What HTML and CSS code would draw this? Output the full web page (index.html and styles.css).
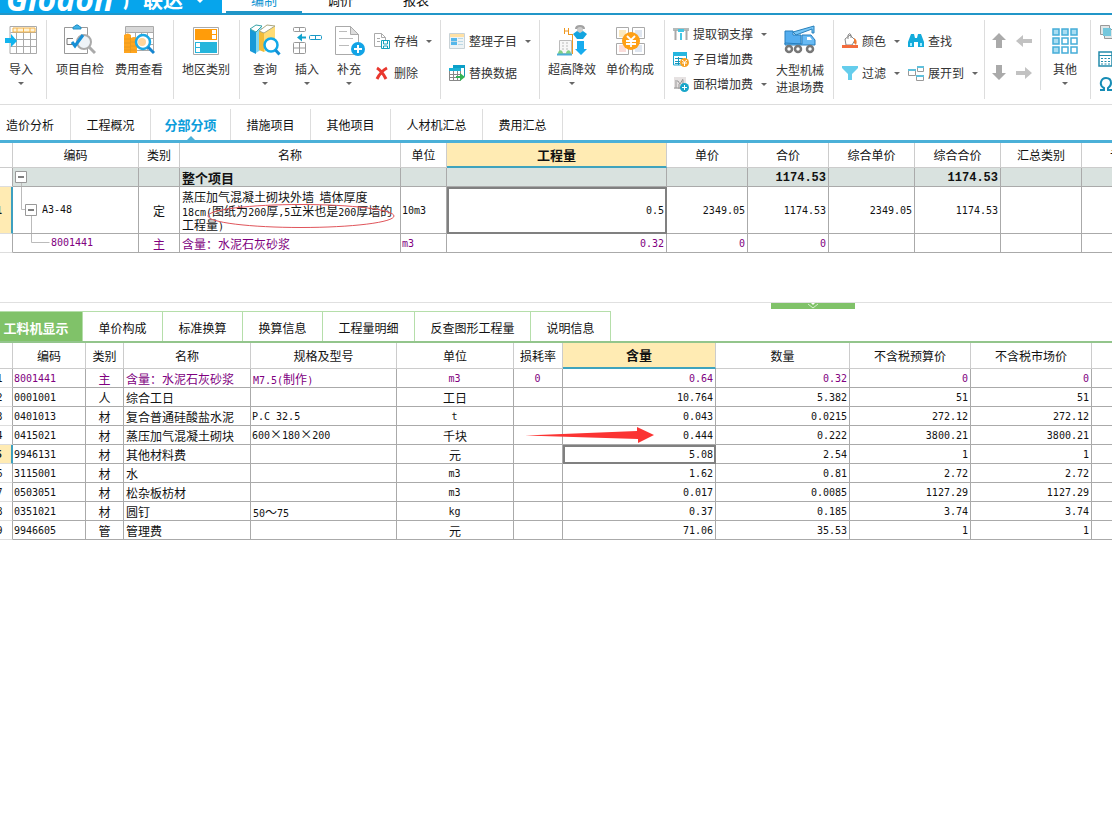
FILE: index.html
```html
<!DOCTYPE html>
<html lang="zh-CN">
<head>
<meta charset="utf-8">
<title>分部分项</title>
<link rel="stylesheet" href="styles.css">
</head>
<body>
<header class="titlebar">
  <button class="brand"><span class="brand-en">Glodon</span><span class="brand-cn">广联达</span><svg class="brand-caret" width="10" height="6" viewBox="0 0 10 6"><path d="M0 0h10L5 5z" fill="#fff"/></svg></button>
  <nav class="menu">
    <button class="menu-item active">编制</button>
    <button class="menu-item">调价</button>
    <button class="menu-item">报表</button>
  </nav>
</header>

<section class="ribbon">
  <div class="group g-import">
    <button class="big"><svg class="i32" viewBox="0 0 32 32"><path d="M5 2.500h26.500v27H5z" fill="#fff" stroke="#aaa"/><path d="M5.500 8.500h26M5.500 15.500h26M5.500 22.500h26M11.500 8v21M18.500 8v21M25.500 8v21" stroke="#aaa" fill="none"/><path d="M8 4h22v4H8zM12 4v4M18.500 4v4M25 4v4" fill="#fff3d8" stroke="#f3b44a"/><path d="M0 14h6v-4l6 7-6 6v-4H0z" fill="#12b4ee"/></svg><span>导入</span><i class="caret"></i></button>
  </div>
  <div class="group g-check">
    <button class="big"><svg class="i32" viewBox="0 0 32 32"><path d="M.5 3.500h23v26H.5z" fill="#fff" stroke="#999"/><path d="M9 4c0-2 2-1 3-3h2c1 2 3 1 3 3v1H9z" fill="#3fb3e8" stroke="#258fc4"/><path d="M9 14.500H3v6h7" fill="none" stroke="#777"/><circle cx="20" cy="18" r="7" fill="#eef3f7" stroke="#aaa" stroke-width="2"/><path d="M25 23l6 6" stroke="#aaa" stroke-width="3"/><path d="M8 18l3 4L19 11" fill="none" stroke="#168fd6" stroke-width="3"/></svg><span>项目自检</span></button>
    <button class="big"><svg class="i32" viewBox="0 0 32 32"><path d="M2.500 2.500h28v24h-28z" fill="#fff" stroke="#aaa"/><path d="M3 3h27v5H3z" fill="#d8d8d8"/><path d="M3 8.500h27M12.500 8v18M18.500 8v18M24.500 8v18M12 14.500h18M12 20.500h18" stroke="#aaa"/><path d="M1 11q4-3 7 0v3q3-2 6 0v15H1z" fill="#ffa51e"/><path d="M1 15h6M1 19h6M1 23h6M1 26h6M8 18h5M8 22h5M8 26h5M7.500 13v16" stroke="#e89a20"/><circle cx="20" cy="18" r="7" fill="#fff" stroke="#1ba8e5" stroke-width="2.500"/><circle cx="19" cy="18" r="4" fill="#ffd59b"/><path d="M25 23l6 6" stroke="#1685d0" stroke-width="3"/></svg><span>费用查看</span></button>
  </div>
  <div class="group g-region">
    <button class="big"><svg class="i32" viewBox="0 0 32 32"><path d="M3.500 3.500h25v27h-25z" fill="#fff" stroke="#aaa"/><path d="M5 5h22v11H5z" fill="#ff9c0a"/><path d="M22 6h4v4h-4zM22 11h4v4h-4z" fill="#fff"/><path d="M5 18h22v11H5z" fill="#25b5dc"/><path d="M6 19h4v4H6zM6 24h4v4H6z" fill="#fff"/></svg><span>地区类别</span></button>
  </div>
  <div class="group g-edit">
    <button class="big"><svg class="i32" viewBox="0 0 32 32"><path d="M1 5l6 3v22l-6-3z" fill="#1799d8"/><path d="M7 8l6-5v22l-6 4z" fill="#7fd6f2"/><path d="M1 5l6-4 6 1-6 6z" fill="#fff" stroke="#36a3a8"/><path d="M10 7l5 2v19l-5-2z" fill="#f1bb38"/><path d="M15 9l11-7v20l-11 6z" fill="#ffdc75"/><path d="M10 7l8-6 8 1-11 7z" fill="#fff" stroke="#aaa67d"/><circle cx="22" cy="21" r="6.500" fill="#fff" stroke="#12a9e8" stroke-width="2.500"/><path d="M26.500 26l4 4.500" stroke="#1390d5" stroke-width="3"/></svg><span>查询</span><i class="caret"></i></button>
    <button class="big"><svg class="i32" viewBox="0 0 32 32"><g fill="#fff" stroke="#999"><rect x="2.500" y="3.500" width="12" height="4" rx="1"/><rect x="2.500" y="18.500" width="12" height="11" rx="1"/><path d="M2.500 24h12M8.500 3.500v4M8.500 18.500v11"/></g><rect x="18.500" y="11.500" width="12" height="4" rx="1" fill="#fff" stroke="#1999c7"/><path d="M24.500 11v5" stroke="#1999c7"/><path d="M6 13.500l5-4v3h4v2h-4v3z" fill="#10a2cd"/></svg><span>插入</span><i class="caret"></i></button>
    <button class="big"><svg class="i32" viewBox="0 0 32 32"><path d="M2.500 2.500h15l8 8v20h-23z" fill="#fff" stroke="#aaa"/><path d="M17.500 2.500v8h8z" fill="#ddd" stroke="#aaa"/><path d="M6 7.500h8M6 14.500h14M6 21.500h10" stroke="#bbb"/><circle cx="25" cy="25" r="7" fill="#12a4e6"/><path d="M21 25h8M25 21v8" stroke="#fff" stroke-width="2"/></svg><span>补充</span><i class="caret"></i></button>
    <div class="stack two">
      <button class="small"><svg class="i16" viewBox="0 0 16 16"><path d="M.5 .5h7l4 4v9H.5z" fill="#fff" stroke="#aaa"/><path d="M7.500 .5v4h4M3 5.500h3M3 8.500h3" stroke="#aaa" fill="none"/><path d="M7.500 7.500h8v8h-8z" fill="#fff" stroke="#15a3bd"/><path d="M9.500 8v3h4V8M9.500 15v-2h4v2" fill="none" stroke="#15a3bd"/></svg><span>存档</span><i class="caret"></i></button>
      <button class="small"><svg class="i16" viewBox="0 0 16 16"><path d="M3 3q5 3 9 11M13 3Q7 6 3 14" stroke="#e9372e" stroke-width="3" fill="none"/></svg><span>删除</span></button>
    </div>
  </div>
  <div class="group g-tidy">
    <div class="stack two">
      <button class="small"><svg class="i16" viewBox="0 0 16 16"><path d="M.5 .5h15v15H.5z" fill="#eef3f5" stroke="#c9d2d6"/><path d="M1 1h14v3H1z" fill="#ffe1a5"/><path d="M2 5h6v7H2z" fill="#55b7ea"/><path d="M2 8.500h6M9 5.500h5M9 8.500h5M9 11.500h5" stroke="#bad8e5"/></svg><span>整理子目</span><i class="caret"></i></button>
      <button class="small"><svg class="i16" viewBox="0 0 16 16"><path d="M4.500 .5h11v11h-11z" fill="#fff" stroke="#1695b4"/><path d="M4 0h12v3H4z" fill="#0c9fc8"/><path d="M.5 3.500h11v12H.5z" fill="#fff" stroke="#888"/><path d="M0 3h12v3H0z" fill="#18b2d6"/><path d="M1 9.500h10M1 12.500h10M4.500 6v9M8.500 6v9" stroke="#888"/><path d="M7 11h4V8l5 4-5 4v-3H7z" fill="#34b454"/></svg><span>替换数据</span></button>
    </div>
  </div>
  <div class="group g-price">
    <button class="big"><svg class="i32" viewBox="0 0 32 32"><path d="M3.500 16.500h12v13h-12z" fill="#f7f7f7" stroke="#bbb"/><path d="M6 19h2M10 19h2M6 22h2M10 22h2M6 25h2M10 25h2" stroke="#bbb"/><path d="M2 30c0-5 5-5 5 0M10 30c0-5 5-5 5 0" fill="#83d083"/><path d="M1 30.500h15" stroke="#4bafd7" stroke-width="2"/><path d="M8.500 4v6M12.500 4v6M8.500 7h4M12 10.500h5M16.500 10v20" fill="none" stroke="#ef9820"/><path d="M19 5q0-4 5-4t5 4z" fill="#a2a2a2"/><circle cx="24" cy="6" r="3" fill="#ccc"/><path d="M17 10l4-3 3 2 3-2 4 3-4 5h-6z" fill="#12a4df"/><path d="M21 17h7v8h3l-6 6-6-6h2z" fill="#17acee"/></svg><span>超高降效</span><i class="caret"></i></button>
    <button class="big"><svg class="i32" viewBox="0 0 32 32"><g fill="#fff" stroke="#aaa"><path d="M2.500 3.500h12v11h-12zM18.500 3.500h12v11h-12zM2.500 19.500h12v11h-12zM18.500 19.500h12v11h-12z"/></g><path d="M5 6h7v7H5z" fill="#fbe9bf"/><path d="M21 6h7v7h-7zM21 21h7v7h-7z" fill="#dfe6f0"/><path d="M5 21h7v7H5z" fill="#fbdcd9"/><circle cx="17" cy="17" r="9" fill="#ffa016"/><path d="M13 12l4 4 4-4M12 17h10M12 20h10M17 16v7" fill="none" stroke="#fff" stroke-width="1.800"/></svg><span>单价构成</span></button>
  </div>
  <div class="group g-fee">
    <div class="stack three">
      <button class="small"><svg class="i16" viewBox="0 0 16 16"><path d="M0 2h16v3H0z" fill="#b5bbbb"/><path d="M2.500 4v10M13.500 4v10" stroke="#aaa" stroke-width="2"/><path d="M5 3h6v3H5zM7 7h2v7H7z" fill="#44c6e3"/></svg><span>提取钢支撑</span><i class="caret"></i></button>
      <button class="small"><svg class="i16" viewBox="0 0 16 16"><path d="M.5 2h13v12H.5z" fill="#fff" stroke="#16a7d1"/><path d="M0 1h14v4H0z" fill="#25b6df"/><path d="M2 7.500h8M2 10.500h5M2 12.500h5M5.500 6v8" stroke="#1798bf"/><circle cx="11.500" cy="11.500" r="4.500" fill="#f7a122"/><path d="M9 9l2.500 2L14 9M9 12h5M11.500 11v4" stroke="#fff" fill="none"/></svg><span>子目增加费</span></button>
      <button class="small"><svg class="i16" viewBox="0 0 16 16"><path d="M1 1h12v12H1z" fill="#e6e2e2"/><path d="M2 5h3l2 3 3-5M3 6v6M6 8v5M10 4v8M1 12h9" stroke="#999" fill="none"/><circle cx="11.500" cy="11.500" r="4.500" fill="#19a6c9"/><path d="M9 11.500h5M11.500 9v5" stroke="#fff"/></svg><span>面积增加费</span><i class="caret"></i></button>
    </div>
    <button class="big tall"><svg class="i32" viewBox="0 0 32 32"><path d="M1 7h8v4h8v9H1z" fill="#54adef" stroke="#277ebd"/><path d="M9 8l21-6v7h-2V5L12 11z" fill="#77c6f7" stroke="#2980bb"/><path d="M18 20V11h9l4 5v5H1v-2z" fill="#68baf4" stroke="#277ebd"/><path d="M23 13h3l2 3h-5z" fill="#fff"/><g fill="#fff" stroke="#777" stroke-width="2.500"><circle cx="5" cy="25" r="3"/><circle cx="14" cy="25" r="3"/><circle cx="26" cy="25" r="3"/></g></svg><span>大型机械<br>进退场费</span></button>
  </div>
  <div class="group g-find">
    <div class="stack two">
      <button class="small"><svg class="i16" viewBox="0 0 16 16"><path d="M3 6l5-4 5 5-3 5H4z" fill="#fff" stroke="#888"/><path d="M6 6V2q2-3 3 0v3" fill="none" stroke="#888"/><path d="M12 5q4 2 2 7l-2-2z" fill="#ef7b32"/><path d="M0 12h16v3H0z" fill="#f36c3d"/></svg><span>颜色</span><i class="caret"></i></button>
      <button class="small"><svg class="i16" viewBox="0 0 16 16"><path d="M0 1h16v2l-6 6v6H6V9L0 3z" fill="#65cdec"/></svg><span>过滤</span><i class="caret"></i></button>
    </div>
    <div class="stack two">
      <button class="small"><svg class="i16" viewBox="0 0 16 16"><path d="M3 1h3l1 4h2l1-4h3l3 8v5h-6V9H6v5H0V9z" fill="#13abdb"/><path d="M2 10h2v3H2zM12 10h2v3h-2z" fill="#a4ecff"/></svg><span>查找</span></button>
      <button class="small"><svg class="i16" viewBox="0 0 16 16"><path d="M.5 4.500h7v6h-7zM9.500 1.500h6v5h-6zM8.500 10.500h7v5h-7z" fill="#fff" stroke="#999"/><path d="M0 4h8v2H0zM9 1h7v2H9zM8 10h8v2H8z" fill="#5fc0dc"/></svg><span>展开到</span><i class="caret"></i></button>
    </div>
  </div>
  <div class="group g-move short">
    <button class="arrow" aria-label="上移"><svg class="i16" viewBox="0 0 16 16"><path d="M8 0l7 7h-4v8H5V7H1z" fill="#aaa"/></svg></button>
    <button class="arrow" aria-label="左移"><svg class="i16" viewBox="0 0 16 16"><path d="M0 8l7-6v4h9v4H7v4z" fill="#c2c2c2"/></svg></button>
    <button class="arrow" aria-label="下移"><svg class="i16" viewBox="0 0 16 16"><path d="M8 15L1 8h4V0h6v8h4z" fill="#aaa"/></svg></button>
    <button class="arrow" aria-label="右移"><svg class="i16" viewBox="0 0 16 16"><path d="M16 8L9 2v4H0v4h9v4z" fill="#c2c2c2"/></svg></button>
  </div>
  <div class="group g-other">
    <button class="big"><svg class="i32" viewBox="0 0 32 32"><g fill="#fff" stroke="#45add8" stroke-width="1.500"><rect x="4" y="5" width="6" height="6" fill="#a9ddf2"/><rect x="13" y="5" width="6" height="6" fill="#a9ddf2"/><rect x="22" y="5" width="6" height="6" fill="#a9ddf2"/><rect x="4" y="14" width="6" height="6" fill="#a9ddf2"/><rect x="13" y="14" width="6" height="6"/><rect x="22" y="14" width="6" height="6"/><rect x="4" y="23" width="6" height="6" fill="#a9ddf2"/><rect x="13" y="23" width="6" height="6"/><rect x="22" y="23" width="6" height="6"/></g></svg><span>其他</span><i class="caret"></i></button>
  </div>
  <div class="group g-tools">
    <button class="arrow" aria-label="图元"><svg class="i16" viewBox="0 0 16 16"><path d="M2.500 .5h9v9h-9zM6.500 4.500h9v9h-9z" fill="#e1e6e7" stroke="#999"/><path d="M5 3h8v8H5z" fill="#74c7dc"/></svg></button>
    <button class="arrow" aria-label="计算器"><svg class="i16" viewBox="0 0 16 16"><path d="M1 1h13v14H1z" fill="#fff" stroke="#248cac" stroke-width="1.500"/><path d="M1 4.500h13" stroke="#248cac"/><path d="M3 7.500h10M3 10.500h10M3 13h10" stroke="#248cac" stroke-dasharray="2 1.500"/></svg></button>
    <button class="arrow" aria-label="特殊符号"><svg class="i16" viewBox="0 0 16 16"><path d="M2 13h4v-2Q2 9 3 5t5-4q5 0 5 5 0 3-3 5v2h5" fill="none" stroke="#168cb5" stroke-width="2"/></svg></button>
  </div>
</section>

<nav class="tabs">
  <button class="tab first">造价分析</button><button class="tab">工程概况</button><button class="tab active">分部分项</button><button class="tab">措施项目</button><button class="tab">其他项目</button><button class="tab wide">人材机汇总</button><button class="tab">费用汇总</button>
</nav>

<main>
<section class="pane upper">
  <table class="grid bill">
    <colgroup><col class="w25"><col class="w126"><col class="w41"><col class="w221"><col class="w46"><col class="w220"><col class="w81"><col class="w81"><col class="w86"><col class="w86"><col class="w81"><col class="w81"></colgroup>
    <thead><tr><th></th><th>编码</th><th>类别</th><th>名称</th><th>单位</th><th class="hot">工程量</th><th>单价</th><th>合价</th><th>综合单价</th><th>综合合价</th><th>汇总类别</th><th>专业</th></tr></thead>
    <tbody>
      <tr class="total"><td class="no"></td><td class="tree"><svg width="20" height="18" viewBox="0 0 20 18"><path d="M2.500 3.500h11v11h-11z" fill="#fff" stroke="#999"/><path d="M5 9h6" stroke="#000"/><path d="M8.500 15v3" stroke="#bbb"/></svg></td><td></td><td>整个项目</td><td></td><td></td><td></td><td class="r n">1174.53</td><td></td><td class="r n">1174.53</td><td></td><td></td></tr>
      <tr class="item"><td class="no cur n">1</td><td class="tree"><div class="node"><svg width="26" height="46" viewBox="0 0 26 46"><path d="M8.500 0v22.500h4M18.500 28v18" fill="none" stroke="#bbb"/><path d="M12.500 17.500h11v11h-11z" fill="#fff" stroke="#999"/><path d="M15 23h6" stroke="#000"/></svg><span class="n">A3-48</span></div></td><td class="c">定</td><td class="desc">蒸压加气混凝土砌块外墙&nbsp; 墙体厚度<br><span class="n">18cm(</span>图纸为<span class="n">200</span>厚<span class="n">,5</span>立米也是<span class="n">200</span>厚墙的<br>工程量<span class="n">)</span></td><td class="n">10m3</td><td class="r n sel">0.5</td><td class="r n">2349.05</td><td class="r n">1174.53</td><td class="r n">2349.05</td><td class="r n">1174.53</td><td></td><td></td></tr>
      <tr class="main"><td class="no"></td><td class="tree"><div class="node"><svg width="38" height="18" viewBox="0 0 38 18"><path d="M18.500 0v8.500h18" fill="none" stroke="#bbb"/></svg><span class="n">8001441</span></div></td><td class="c">主</td><td>含量：水泥石灰砂浆</td><td class="n">m3</td><td class="r n">0.32</td><td class="r n">0</td><td class="r n">0</td><td></td><td></td><td></td><td></td></tr>
    </tbody>
  </table>
  <svg class="circle-mark" width="188" height="26" viewBox="0 0 188 26"><ellipse cx="94" cy="13" rx="93" ry="11.500" fill="none" stroke="#e0555b"/></svg>
</section>

<div class="splitter"><button class="handle" aria-label="收起"><svg width="10" height="6" viewBox="0 0 10 6"><path d="M3 0h4L5 2z" fill="#fff"/><path d="M0 1l5 4 5-4" fill="none" stroke="#d8f0cf"/></svg></button></div>

<nav class="subtabs">
  <button class="subtab active">工料机显示</button><button class="subtab">单价构成</button><button class="subtab">标准换算</button><button class="subtab">换算信息</button><button class="subtab wide">工程量明细</button><button class="subtab wider">反查图形工程量</button><button class="subtab">说明信息</button>
</nav>

<section class="pane">
  <table class="grid res">
    <colgroup><col class="w25"><col class="w73"><col class="w38"><col class="w127"><col class="w146"><col class="w117"><col class="w49"><col class="w153"><col class="w134"><col class="w121"><col class="w121"><col class="w81"></colgroup>
    <thead><tr><th></th><th>编码</th><th>类别</th><th>名称</th><th>规格及型号</th><th>单位</th><th>损耗率</th><th class="hot">含量</th><th>数量</th><th>不含税预算价</th><th>不含税市场价</th><th></th></tr></thead>
    <tbody>
      <tr class="main"><td class="no n">1</td><td class="n">8001441</td><td class="c">主</td><td>含量：水泥石灰砂浆</td><td><span class="n">M7.5(</span>制作<span class="n">)</span></td><td class="c n">m3</td><td class="c n">0</td><td class="r n">0.64</td><td class="r n">0.32</td><td class="r n">0</td><td class="r n">0</td><td></td></tr>
      <tr><td class="no n">2</td><td class="n">0001001</td><td class="c">人</td><td>综合工日</td><td></td><td class="c">工日</td><td></td><td class="r n">10.764</td><td class="r n">5.382</td><td class="r n">51</td><td class="r n">51</td><td></td></tr>
      <tr><td class="no n">3</td><td class="n">0401013</td><td class="c">材</td><td>复合普通硅酸盐水泥</td><td class="n">P.C 32.5</td><td class="c n">t</td><td></td><td class="r n">0.043</td><td class="r n">0.0215</td><td class="r n">272.12</td><td class="r n">272.12</td><td></td></tr>
      <tr><td class="no n">4</td><td class="n">0415021</td><td class="c">材</td><td>蒸压加气混凝土砌块</td><td class="n">600<span class="times">×</span>180<span class="times">×</span>200</td><td class="c">千块</td><td></td><td class="r n">0.444</td><td class="r n">0.222</td><td class="r n">3800.21</td><td class="r n">3800.21</td><td></td></tr>
      <tr><td class="no cur n">5</td><td class="n">9946131</td><td class="c">材</td><td>其他材料费</td><td></td><td class="c">元</td><td></td><td class="r n sel">5.08</td><td class="r n">2.54</td><td class="r n">1</td><td class="r n">1</td><td></td></tr>
      <tr><td class="no n">6</td><td class="n">3115001</td><td class="c">材</td><td>水</td><td></td><td class="c n">m3</td><td></td><td class="r n">1.62</td><td class="r n">0.81</td><td class="r n">2.72</td><td class="r n">2.72</td><td></td></tr>
      <tr><td class="no n">7</td><td class="n">0503051</td><td class="c">材</td><td>松杂板枋材</td><td></td><td class="c n">m3</td><td></td><td class="r n">0.017</td><td class="r n">0.0085</td><td class="r n">1127.29</td><td class="r n">1127.29</td><td></td></tr>
      <tr><td class="no n">8</td><td class="n">0351021</td><td class="c">材</td><td>圆钉</td><td><span class="n">50</span>～<span class="n">75</span></td><td class="c n">kg</td><td></td><td class="r n">0.37</td><td class="r n">0.185</td><td class="r n">3.74</td><td class="r n">3.74</td><td></td></tr>
      <tr><td class="no n">9</td><td class="n">9946605</td><td class="c">管</td><td>管理费</td><td></td><td class="c">元</td><td></td><td class="r n">71.06</td><td class="r n">35.53</td><td class="r n">1</td><td class="r n">1</td><td></td></tr>
    </tbody>
  </table>
  <svg class="arrow-mark" width="130" height="16" viewBox="0 0 130 16"><path d="M0 8.500L112 4V0l17 8-16 8v-4z" fill="#fb3433"/></svg>
</section>
</main>
</body>
</html>
```
FILE: styles.css
```css
* { box-sizing: border-box; }
body {
  margin: 0;
  background: #fff;
  color: #111;
  font: 12px/16px "Noto Sans CJK SC", sans-serif;
  overflow-x: hidden;
}
button {
  margin: 0;
  padding: 0;
  border: 0;
  background: none;
  color: inherit;
  font: inherit;
  white-space: nowrap;
}
svg { display: block; flex: none; }

/* title bar */
.titlebar {
  display: flex;
  align-items: flex-end;
  height: 15px;
  overflow: hidden;
  border-bottom: 2px solid #2196c8;
}
.brand {
  display: flex;
  align-items: flex-end;
  justify-content: flex-start;
  flex: none;
  width: 222px;
  height: 32px;
  padding: 0 0 4px 6px;
  background: #06a5ec;
  color: #fff;
  font-weight: 700;
}
.brand-en {
  flex: none;
  width: 117px;
  font: italic 700 32px/20px "Open Sans", sans-serif;
  text-align: left;
}
.brand-cn { flex: none; width: 72px; font-size: 20px; line-height: 18px; text-align: left; }
.brand-caret { margin-bottom: 5px; }
.menu { display: flex; padding-left: 4px; }
.menu-item {
  width: 76px;
  padding-bottom: 3px;
  border-bottom: 2px solid transparent;
  font-size: 13px;
}
.menu-item.active { color: #1094d2; border-color: #2196c8; }

/* ribbon */
.ribbon {
  display: flex;
  height: 90px;
  overflow: hidden;
  border-bottom: 1px solid #ddd;
  color: #333;
}
.group {
  display: flex;
  flex: none;
  margin: 5px 0;
  padding-top: 4px;
  border-right: 1px solid #ddd;
}
.big {
  display: flex;
  flex-direction: column;
  align-items: center;
  align-self: flex-start;
  gap: 5px;
}
.big .i32 { width: 32px; height: 32px; }
.i16 { width: 16px; height: 16px; }
.caret {
  border: 3px solid transparent;
  border-top-color: #666;
  border-bottom: 0;
}
.stack { display: flex; flex-direction: column; }
.stack.two { gap: 16px; padding-top: 9px; }
.stack.three { gap: 9px; padding-top: 2px; }
.small { display: flex; align-items: center; gap: 4px; }
.small .caret { margin-left: 4px; }
.g-import { width: 47px; padding-left: 5px; }
.g-check { width: 127px; padding-left: 9px; gap: 11px; }
.g-region { width: 66px; padding-left: 8px; }
.g-edit { width: 201px; padding-left: 9px; gap: 10px; }
.g-edit .stack { margin-left: -1px; }
.g-tidy { width: 99px; padding-left: 8px; }
.g-price { width: 125px; padding-left: 8px; gap: 10px; }
.g-fee { width: 169px; padding-left: 8px; gap: 9px; }
.g-fee .small .caret { margin-left: 4px; }
.g-find { width: 151px; padding-left: 8px; gap: 8px; }
.g-move {
  display: grid;
  grid-template-columns: 16px 16px;
  align-content: start;
  gap: 16px 9px;
  width: 56px;
  padding: 4px 0 0 6px;
}
.group.short { margin: 14px 0; }
.g-other { width: 50px; padding-left: 8px; }
.g-tools { flex-direction: column; gap: 10px; padding: 5px 0 0 7px; border: 0; }
.g-fee .tall { line-height: 17px; }

/* page tabs */
.tabs {
  display: flex;
  height: 38px;
  padding-top: 4px;
  border-bottom: 3px solid #4bb0d8;
}
.tab {
  position: relative;
  width: 80px;
  border-right: 1px solid #ddd;
}
.tab.first { width: 71px; padding-right: 10px; }
.tab.wide { width: 92px; }
.tab.active { color: #0d9ddb; font-size: 13px; font-weight: 700; }
.tab.active::after {
  content: "";
  position: absolute;
  left: 50%;
  bottom: 0;
  margin-left: -4px;
  border: 4px solid transparent;
  border-top: 0;
  border-bottom-color: #4bb0d8;
}

/* grids */
.pane { position: relative; overflow: hidden; }
.upper { min-height: 159px; }
.grid {
  margin-left: -12px;
  table-layout: fixed;
  width: 1174px;
  border-collapse: separate;
  border-spacing: 0;
}
.res { width: 1185px; }
.grid th, .grid td {
  height: 19px;
  padding: 0 2px;
  border-right: 1px solid #aaa;
  border-bottom: 1px solid #aaa;
  text-align: left;
  white-space: nowrap;
  line-height: 16px;
}
.grid td { padding: 1px 2px 0 2px; }
.grid th {
  height: 25px;
  text-align: center;
  font-weight: 400;
  border-color: #ccc;
}
.grid th.hot {
  background: #ffebb3;
  border-bottom: 2px solid #3fa3bd;
  font-weight: 700;
  font-size: 13px;
}
.res th { height: 26px; }
.grid .n { font-family: "DejaVu Sans Mono", monospace; font-size: 10px; }
.grid td.n { padding: 2px 2px 0 1px; }
.grid span.n { line-height: 10px; }
.grid .r { text-align: right; }
.grid .c { text-align: center; }
.grid .no { text-align: center; border-bottom-color: #ddd; }
.grid .no.cur {
  background: #ffebb3;
  border-right: 2px solid #3d9fc0;
  font-weight: 700;
}
.grid .sel { outline: 2px solid #808080; outline-offset: -2px; }
.main { color: #800080; }
.main .no { color: #111; }
.grid .total td { background: #d9e2df; font-weight: 700; font-size: 13px; }
.grid .total td.no { background: #fff; }
.grid .total .n { font: 700 12px/16px "Liberation Mono", monospace; }
.grid .item td { height: 47px; }
.grid .desc { line-height: 14px; }
.grid .tree { padding: 0; }
.node { display: flex; align-items: center; }
.item .node { gap: 3px; }
.times { font-family: "Noto Sans CJK JP", sans-serif; font-size: 12px; line-height: 10px; }
.w25 { width: 25px; } .w38 { width: 38px; } .w41 { width: 41px; }
.w46 { width: 46px; } .w49 { width: 49px; } .w73 { width: 73px; }
.w81 { width: 81px; } .w86 { width: 86px; } .w117 { width: 117px; }
.w121 { width: 121px; } .w126 { width: 126px; } .w127 { width: 127px; }
.w134 { width: 134px; } .w146 { width: 146px; } .w153 { width: 153px; }
.w220 { width: 220px; } .w221 { width: 221px; }

/* annotations drawn over the grids */
.circle-mark { position: absolute; left: 207px; top: 60px; }
.arrow-mark { position: absolute; left: 525px; top: 84px; }

/* splitter */
.splitter {
  display: flex;
  height: 9px;
  padding-left: 771px;
  border-top: 1px solid #e0e0e0;
}
.handle {
  display: flex;
  justify-content: center;
  width: 84px;
  height: 6px;
  background: #80c269;
}

/* detail tabs */
.subtabs {
  display: flex;
  height: 32px;
  border-bottom: 2px solid #93c58c;
}
.subtab {
  width: 80px;
  padding-top: 3px;
  border: 1px solid #b5deaa;
  border-width: 1px 1px 0 0;
}
.subtab.active {
  width: 83px;
  padding: 3px 10px 0 0;
  background: #80c269;
  color: #fff;
  font-size: 13px;
  font-weight: 700;
}
.subtab.wide { width: 92px; }
.subtab.wider { width: 116px; }
```
